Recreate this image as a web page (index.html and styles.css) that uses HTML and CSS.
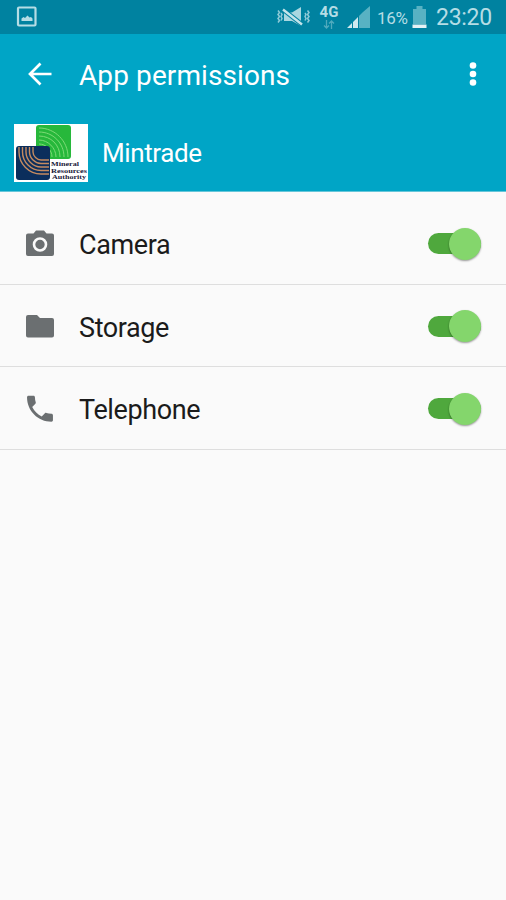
FILE: index.html
```
<!DOCTYPE html>
<html lang="en">
<head>
  <meta charset="UTF-8">
  <title>App permissions</title>
  <link rel="stylesheet" href="styles.css">
</head>
<body>
  <!-- Status bar -->
  <div class="status-bar">
    <svg class="picture-icon" width="22" height="22" viewBox="0 0 22 22">
      <rect x="2" y="1.500" width="17.500" height="18" rx="1" fill="none" stroke="#b5dde5" stroke-width="2.200"/>
      <path d="M5.500 15v-2.500l2-1.500 1.500 1 2.500-2.500 2 2 1.500-.5 1.500 1.500V15z" fill="#b5dde5"/>
    </svg>
    <svg class="mute-icon" width="34" height="22" viewBox="0 0 34 22">
      <g fill="none" stroke="#8fcad7" stroke-width="1.500">
        <path d="M2 4.500l1.500 2-1.500 2 1.500 2-1.500 2 1.500 2-1.500 2"/>
        <path d="M5 7l1 1.500-1 2 1 2-1 2"/>
        <path d="M29 7l1 1.500-1 2 1 2-1 2"/>
        <path d="M31.500 4.500l1.500 2-1.500 2 1.500 2-1.500 2 1.500 2-1.500 2"/>
      </g>
      <path d="M8 6.500h8L25 1v19l-9-5H8z" fill="#a9d7e0"/>
      <path d="M7 3.500l19 15" stroke="#0082a0" stroke-width="4.600"/>
      <path d="M7 3.500l19 15" stroke="#c3e4ea" stroke-width="2.400"/>
    </svg>
    <div class="network">
      <span>4G</span>
      <svg width="12" height="9" viewBox="0 0 12 9">
        <path d="M3.500 0v8M1 5.500l2.500 2.500L6 5.500M8.500 9V1M6 3.500L8.500 1 11 3.500" fill="none" stroke="#4faabd" stroke-width="1.300"/>
      </svg>
    </div>
    <svg class="signal-icon" width="24" height="23" viewBox="0 0 24 23">
      <path d="M0 22l5-5v5zM6 16l5-5v11H6z" fill="#d0e9ee"/>
      <path d="M12 10l4-4v16h-4zM16 6L23 0v22h-7z" fill="#58b2c3"/>
    </svg>
    <span class="battery-level">16%</span>
    <svg class="battery-icon" width="15" height="23" viewBox="0 0 15 23">
      <path d="M1 3h3.500V0h6v3H14v15H1z" fill="#58b2c3"/>
      <path d="M.5 18.500h14V22H.5z" fill="#e4f2f5"/>
    </svg>
    <span class="clock">23:20</span>
  </div>

  <!-- Header -->
  <div class="header">
    <div class="toolbar">
      <svg class="back-icon" width="24" height="24" viewBox="0 0 24 24">
        <path d="M12.500 1.500L2 12l10.500 10.500M2 12h21.500" fill="none" stroke="#fff" stroke-width="2.700"/>
      </svg>
      <h1>App permissions</h1>
      <svg class="menu-icon" width="8" height="26" viewBox="0 0 8 26">
        <g fill="#fff">
          <circle cx="4" cy="4.500" r="3.300"/>
          <circle cx="4" cy="13" r="3.300"/>
          <circle cx="4" cy="21.500" r="3.300"/>
        </g>
      </svg>
    </div>
    <div class="app-info">
      <svg class="app-logo" width="74" height="58" viewBox="0 0 74 58">
        <rect width="74" height="58" fill="#fff"/>
        <rect x="22" y="1" width="35" height="34" rx="3" fill="#27b83b"/>
        <g fill="none" stroke="#7ddb76" stroke-width="1">
          <path d="M25 4c16 0 29 13 29 29"/>
          <path d="M25 8c14 0 25 11 25 25"/>
          <path d="M25 12c12 0 21 9 21 21"/>
          <path d="M25 16c9 0 17 8 17 17"/>
          <path d="M25 20c7 0 13 6 13 13"/>
        </g>
        <rect x="2" y="22" width="34" height="34" rx="3" fill="#0b2e5c"/>
        <g fill="none" stroke="#c58b60" stroke-width="1.400">
          <path d="M5 23v5c0 12 10 22 22 22h8"/>
          <path d="M8.500 23v5c0 10 8.500 18.500 18.500 18.500h8"/>
          <path d="M12 23v5c0 8 7 15 15 15h8"/>
          <path d="M15.500 23v5c0 6 5.500 11.500 11.500 11.500h8"/>
          <path d="M19 23v5c0 4 4 8 8 8h8"/>
        </g>
        <g class="logo-text">
          <text x="37" y="41.500" textLength="28" lengthAdjust="spacingAndGlyphs">Mineral</text>
          <text x="37" y="48.500" textLength="36" lengthAdjust="spacingAndGlyphs">Resources</text>
          <text x="38" y="55" textLength="34" lengthAdjust="spacingAndGlyphs">Authority</text>
        </g>
      </svg>
      <span class="app-name">Mintrade</span>
    </div>
  </div>

  <!-- Permissions -->
  <div class="permissions">
    <div class="permission">
      <svg class="permission-icon" width="32" height="32" viewBox="0 0 32 32">
        <path d="M4 5.500h5.500L12 2.500h8l2.500 3H28q2 0 2 2v18.500q0 2-2 2H4q-2 0-2-2V7.500q0-2 2-2z" fill="#6b6f71"/>
        <circle cx="16" cy="16.500" r="6" fill="#6b6f71" stroke="#fafafa" stroke-width="2.600"/>
      </svg>
      <span class="permission-name">Camera</span>
      <div class="switch"><div class="thumb"></div></div>
    </div>
    <div class="permission">
      <svg class="permission-icon" width="32" height="32" viewBox="0 0 32 32">
        <path d="M4 5h9l3 3h12q2 0 2 2v15.500q0 2-2 2H4q-2 0-2-2V7q0-2 2-2z" fill="#6b6f71"/>
      </svg>
      <span class="permission-name">Storage</span>
      <div class="switch"><div class="thumb"></div></div>
    </div>
    <div class="permission">
      <svg class="permission-icon" width="32" height="32" viewBox="0 0 32 32">
        <path transform="translate(-1.300 -1.600) scale(1.440)" d="M6.620 10.790c1.440 2.830 3.760 5.140 6.590 6.590l2.200-2.200c.27-.27.67-.36 1.020-.24 1.120.37 2.330.57 3.570.57.550 0 1 .45 1 1V20c0 .55-.45 1-1 1-9.390 0-17-7.610-17-17 0-.55.45-1 1-1h3.500c.55 0 1 .45 1 1 0 1.250.2 2.450.57 3.570.11.35.03.74-.25 1.020l-2.200 2.200z" fill="#6b6f71"/>
      </svg>
      <span class="permission-name">Telephone</span>
      <div class="switch"><div class="thumb"></div></div>
    </div>
  </div>
</body>
</html>
```
FILE: styles.css
```
* {
  box-sizing: border-box;
}

body {
  margin: 0;
  min-height: 900px;
  background-color: #fafafa;
  font-family: Roboto, sans-serif;
}

svg {
  display: block;
  flex: none;
}

.status-bar {
  display: flex;
  align-items: center;
  height: 34px;
  padding-left: 16px;
  background-color: #0082a0;
  color: #b5dde5;
}

.mute-icon {
  margin-left: 238px;
}

.network {
  display: flex;
  flex-direction: column;
  align-items: center;
  width: 20px;
  margin: -2px 0 0 9px;
  font-size: 15px;
  font-weight: bold;
  line-height: 16px;
}

.signal-icon {
  margin-left: 8px;
}

.battery-level {
  width: 32px;
  margin: 1px 0 0 6px;
  font-size: 17px;
  letter-spacing: -0.3px;
  white-space: nowrap;
}

.battery-icon {
  margin-left: 3px;
}

.clock {
  margin: 1px 0 0 9px;
  font-size: 23px;
  letter-spacing: -0.3px;
}

.header {
  height: 158px;
  background-color: #00a5c6;
  border-bottom: 1px solid #66c6d9;
  color: #fff;
}

.toolbar {
  display: flex;
  align-items: center;
  height: 80px;
  padding: 0 29px 0 28px;
}

.toolbar h1 {
  flex: 1;
  margin: 2px 0 0 27px;
  font-size: 28px;
  font-weight: normal;
  letter-spacing: 0.1px;
}

.app-info {
  display: flex;
  align-items: center;
  height: 77px;
  padding-left: 14px;
}

.app-name {
  margin: 1px 0 0 14px;
  font-size: 26px;
  letter-spacing: -0.4px;
}

.logo-text {
  fill: #20203a;
  font-family: "Liberation Serif", serif;
  font-size: 7px;
  font-weight: bold;
}

.permissions {
  padding-top: 10px;
}

.permission {
  display: flex;
  align-items: center;
  height: 82.5px;
  padding: 2px 25px 0 24px;
  border-bottom: 1px solid #dedede;
}

.permission-name {
  flex: 1;
  margin: 3px 0 0 23px;
  color: #1b1b1b;
  font-size: 27px;
  letter-spacing: -0.4px;
}

.switch {
  display: flex;
  align-items: center;
  justify-content: flex-end;
  width: 53px;
  height: 21px;
  border-radius: 11px;
  background-color: #4fa83d;
}

.thumb {
  flex: none;
  width: 32px;
  height: 32px;
  border-radius: 50%;
  background-color: #84d66c;
  box-shadow: 0 1px 2px rgba(0, 0, 0, 0.4);
}
```
